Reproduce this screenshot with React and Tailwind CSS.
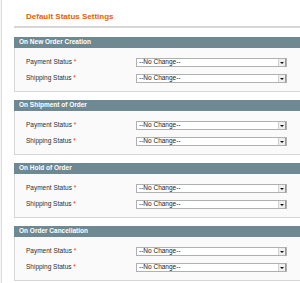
const sections = [
  'On New Order Creation',
  'On Shipment of Order',
  'On Hold of Order',
  'On Order Cancellation',
]

const StatusSelect = () => (
  <div className="w-[151px] h-[9px] border border-[#b0b0b0] bg-white flex items-center shrink-0">
    <span className="flex-1 pl-[2px] text-[6.5px] leading-none text-[#222] whitespace-nowrap">--No Change--</span>
    <div className="w-[8px] h-full bg-[#efefef] border-l border-[#d0d0d0] border-r border-r-[#9a9a9a] flex items-center justify-center">
      <div className="w-0 h-0 border-l-[2px] border-r-[2px] border-t-[2px] border-l-transparent border-r-transparent border-t-[#111]" />
    </div>
  </div>
)

const StatusRow = ({ label }) => (
  <div className="flex items-center h-[9px]">
    <div className="w-[110px] text-[6.5px] leading-none text-[#2f2f2f] whitespace-nowrap">
      {label} <span className="text-[#eb340a]">*</span>
    </div>
    <StatusSelect />
  </div>
)

const Fieldset = ({ title }) => (
  <div className="w-[300px]">
    <div className="h-[11px] bg-[#6f8992] flex items-center pl-[5px]">
      <span className="text-[6.5px] font-bold text-white leading-none whitespace-nowrap">{title}</span>
    </div>
    <div className="h-[44px] border border-t-0 border-[#d6d6d6] bg-[#fafafa] pl-[11px] pt-[10px] flex flex-col gap-[7px]">
      <StatusRow label="Payment Status" />
      <StatusRow label="Shipping Status" />
    </div>
  </div>
)

export default function App() {
  return (
    <div className="w-[300px] h-[283px] bg-white flex overflow-hidden font-['Liberation_Sans',Arial,sans-serif]">
      {/* left sidebar edge */}
      <div className="w-[2px] shrink-0 bg-[#f6f6f6] border-r border-[#dcdcdc]" />

      <div className="ml-[12px] flex-1 overflow-hidden">
        {/* Title */}
        <div className="pt-[12px] pb-[4px] pl-[12px] border-b-2 border-[#d6d6d6] w-[300px]">
          <h1 className="text-[8px] leading-[10px] font-bold text-[#eb5e00] whitespace-nowrap">
            Default Status Settings
          </h1>
        </div>

        {/* Sections */}
        <div className="mt-[9px] flex flex-col gap-[8px]">
          {sections.map((title) => (
            <Fieldset key={title} title={title} />
          ))}
        </div>
      </div>
    </div>
  )
}
